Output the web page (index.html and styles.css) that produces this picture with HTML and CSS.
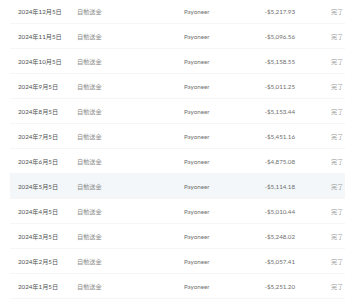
FILE: index.html
```html
<!DOCTYPE html>
<html lang="ja">
<head>
<meta charset="utf-8">
<link rel="stylesheet" href="styles.css">
</head>
<body>
<div class="table">
  <div class="row"><span class="date">2024年12月5日</span><span class="type">自動送金</span><span class="payee">Payoneer</span><span class="amount">-$5,217.93</span><span class="status">完了</span></div>
  <div class="row"><span class="date">2024年11月5日</span><span class="type">自動送金</span><span class="payee">Payoneer</span><span class="amount">-$5,096.56</span><span class="status">完了</span></div>
  <div class="row"><span class="date">2024年10月5日</span><span class="type">自動送金</span><span class="payee">Payoneer</span><span class="amount">-$5,158.55</span><span class="status">完了</span></div>
  <div class="row"><span class="date">2024年9月5日</span><span class="type">自動送金</span><span class="payee">Payoneer</span><span class="amount">-$5,011.25</span><span class="status">完了</span></div>
  <div class="row"><span class="date">2024年8月5日</span><span class="type">自動送金</span><span class="payee">Payoneer</span><span class="amount">-$5,153.44</span><span class="status">完了</span></div>
  <div class="row"><span class="date">2024年7月5日</span><span class="type">自動送金</span><span class="payee">Payoneer</span><span class="amount">-$5,451.16</span><span class="status">完了</span></div>
  <div class="row"><span class="date">2024年6月5日</span><span class="type">自動送金</span><span class="payee">Payoneer</span><span class="amount">-$4,875.08</span><span class="status">完了</span></div>
  <div class="row hover"><span class="date">2024年5月5日</span><span class="type">自動送金</span><span class="payee">Payoneer</span><span class="amount">-$5,114.18</span><span class="status">完了</span></div>
  <div class="row"><span class="date">2024年4月5日</span><span class="type">自動送金</span><span class="payee">Payoneer</span><span class="amount">-$5,010.44</span><span class="status">完了</span></div>
  <div class="row"><span class="date">2024年3月5日</span><span class="type">自動送金</span><span class="payee">Payoneer</span><span class="amount">-$5,248.02</span><span class="status">完了</span></div>
  <div class="row"><span class="date">2024年2月5日</span><span class="type">自動送金</span><span class="payee">Payoneer</span><span class="amount">-$5,057.41</span><span class="status">完了</span></div>
  <div class="row"><span class="date">2024年1月5日</span><span class="type">自動送金</span><span class="payee">Payoneer</span><span class="amount">-$5,251.20</span><span class="status">完了</span></div>
</div>
</body>
</html>
```
FILE: styles.css
```css
html, body {
  margin: 0;
  padding: 0;
  background: #ffffff;
}
body {
  font-family: Lato, "Noto Sans CJK JP", sans-serif;
  font-size: 6.2px;
  color: #555;
}
.table {
  width: 335px;
  margin: -1px 0 0 10px;
}
.row {
  display: grid;
  grid-template-columns: 59px 107px 60px 51px 1fr;
  align-items: center;
  height: 25px;
  box-sizing: border-box;
  padding-left: 8px;
  border-bottom: 1px solid #f6f6f6;
}
.row.hover {
  background: #f3f7fa;
}
.date { color: #505050; }
.type { color: #909090; }
.payee { color: #6e6e6e; }
.amount { color: #6e6e6e; text-align: right; }
.status { color: #a0a0a0; padding-left: 36px; }
```
